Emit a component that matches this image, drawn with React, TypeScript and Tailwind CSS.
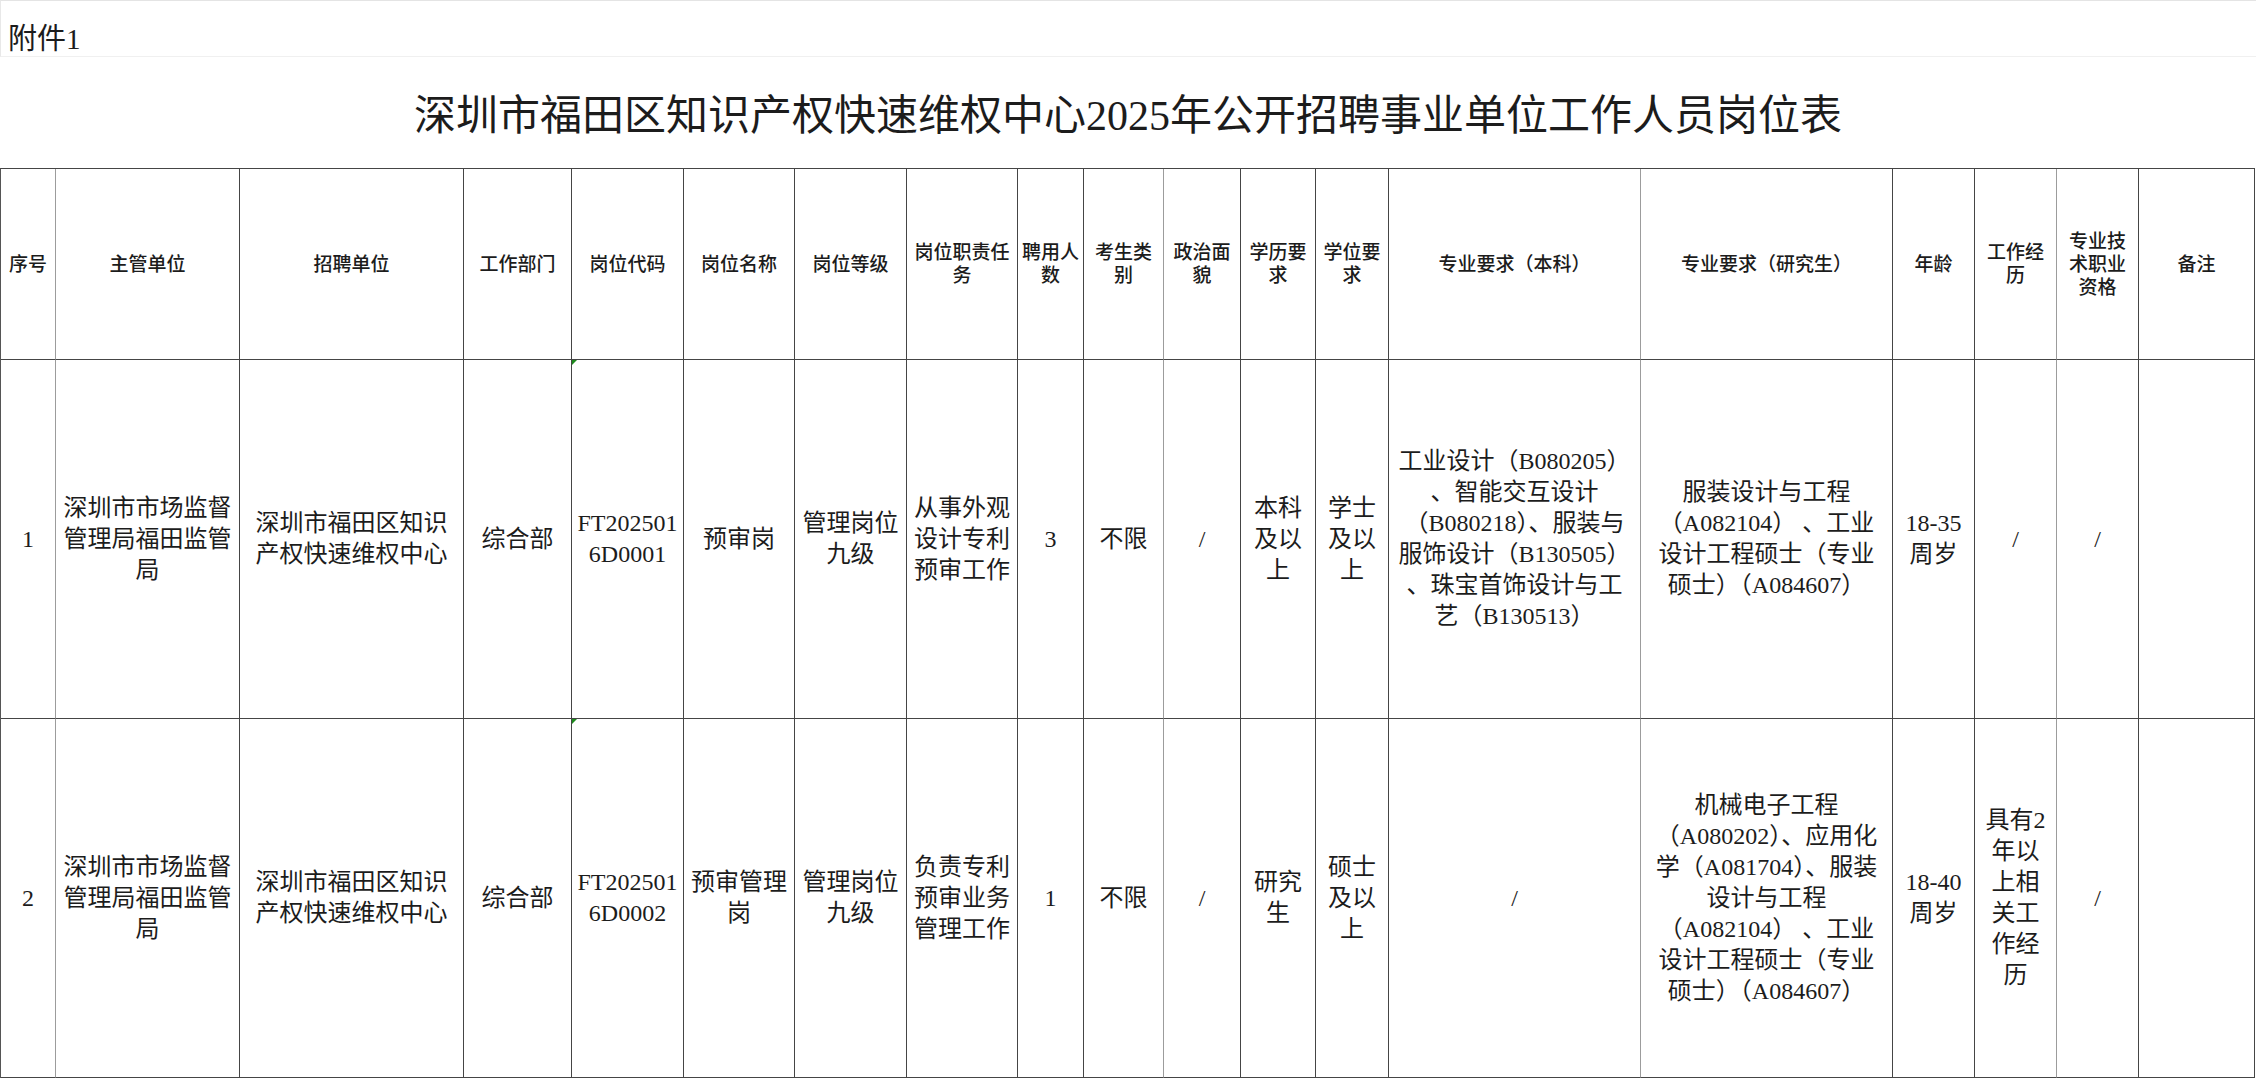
import clsx from "clsx"

// 列宽度与右侧竖线是否为浅灰色
const lightCols = [0, 9, 13, 16]

const header: string[][] = [
  ["序号"],
  ["主管单位"],
  ["招聘单位"],
  ["工作部门"],
  ["岗位代码"],
  ["岗位名称"],
  ["岗位等级"],
  ["岗位职责任", "务"],
  ["聘用人", "数"],
  ["考生类", "别"],
  ["政治面", "貌"],
  ["学历要", "求"],
  ["学位要", "求"],
  ["专业要求（本科）"],
  ["专业要求（研究生）"],
  ["年龄"],
  ["工作经", "历"],
  ["专业技", "术职业", "资格"],
  ["备注"],
]

const rows: string[][][] = [
  [
    ["1"],
    ["深圳市市场监督", "管理局福田监管", "局"],
    ["深圳市福田区知识", "产权快速维权中心"],
    ["综合部"],
    ["FT202501", "6D0001"],
    ["预审岗"],
    ["管理岗位", "九级"],
    ["从事外观", "设计专利", "预审工作"],
    ["3"],
    ["不限"],
    ["/"],
    ["本科", "及以", "上"],
    ["学士", "及以", "上"],
    ["工业设计（B080205）", "、智能交互设计", "（B080218）、服装与", "服饰设计（B130505）", "、珠宝首饰设计与工", "艺（B130513）"],
    ["服装设计与工程", "（A082104） 、工业", "设计工程硕士（专业", "硕士）（A084607）"],
    ["18-35", "周岁"],
    ["/"],
    ["/"],
    [],
  ],
  [
    ["2"],
    ["深圳市市场监督", "管理局福田监管", "局"],
    ["深圳市福田区知识", "产权快速维权中心"],
    ["综合部"],
    ["FT202501", "6D0002"],
    ["预审管理", "岗"],
    ["管理岗位", "九级"],
    ["负责专利", "预审业务", "管理工作"],
    ["1"],
    ["不限"],
    ["/"],
    ["研究", "生"],
    ["硕士", "及以", "上"],
    ["/"],
    ["机械电子工程", "（A080202）、应用化", "学（A081704）、服装", "设计与工程", "（A082104） 、工业", "设计工程硕士（专业", "硕士）（A084607）"],
    ["18-40", "周岁"],
    ["具有2", "年以", "上相", "关工", "作经", "历"],
    ["/"],
    [],
  ],
]

function Cell({ lines, col, head, mark }: { lines: string[]; col: number; head?: boolean; mark?: boolean }) {
  return (
    <div
      className={clsx(
        "relative flex flex-col items-center justify-center border-b border-r border-b-[#454545] text-center",
        lightCols.includes(col) ? "border-r-[#9c9c9c]" : "border-r-[#454545]",
        head ? "text-[19px] leading-[23px] font-medium" : "text-[24px] leading-[31px]"
      )}
    >
      {mark && (
        <span className="absolute left-0 top-0 h-0 w-0 border-t-[5px] border-r-[5px] border-t-[#1d8a1d] border-r-transparent" />
      )}
      {lines.map((l, i) => (
        <span key={i} className="block whitespace-pre">
          {l}
        </span>
      ))}
    </div>
  )
}

export default function App() {
  return (
    <div className="h-[1080px] w-[2256px] overflow-hidden bg-white font-['Liberation_Serif','Noto_Sans_CJK_SC',serif] text-[#1c1c1c]">
      {/* 附件 */}
      <div className="h-[57px] border-t border-b border-l border-t-[#e4e4e4] border-b-[#f0f0f0] border-l-[#e8e8e8] pl-[7px] pt-[24px] text-[29px] leading-[29px]">
        附件1
      </div>

      {/* 标题 */}
      <div className="flex h-[111px] items-center justify-center pt-[7px] text-[42px] leading-[44px]">
        深圳市福田区知识产权快速维权中心2025年公开招聘事业单位工作人员岗位表
      </div>

      {/* 表格 */}
      <div className="grid w-[2255px] grid-cols-[55px_184px_224px_108px_112px_111px_112px_111px_66px_80px_77px_75px_73px_252px_252px_82px_82px_82px_116px] grid-rows-[191px_359px_359px] border-t border-l border-t-[#454545] border-l-[#555]">
        {header.map((h, i) => (
          <Cell key={"h" + i} lines={h} col={i} head />
        ))}
        {rows.map((r, ri) =>
          r.map((c, ci) => <Cell key={ri + "-" + ci} lines={c} col={ci} mark={ci === 4} />)
        )}
      </div>
    </div>
  )
}
